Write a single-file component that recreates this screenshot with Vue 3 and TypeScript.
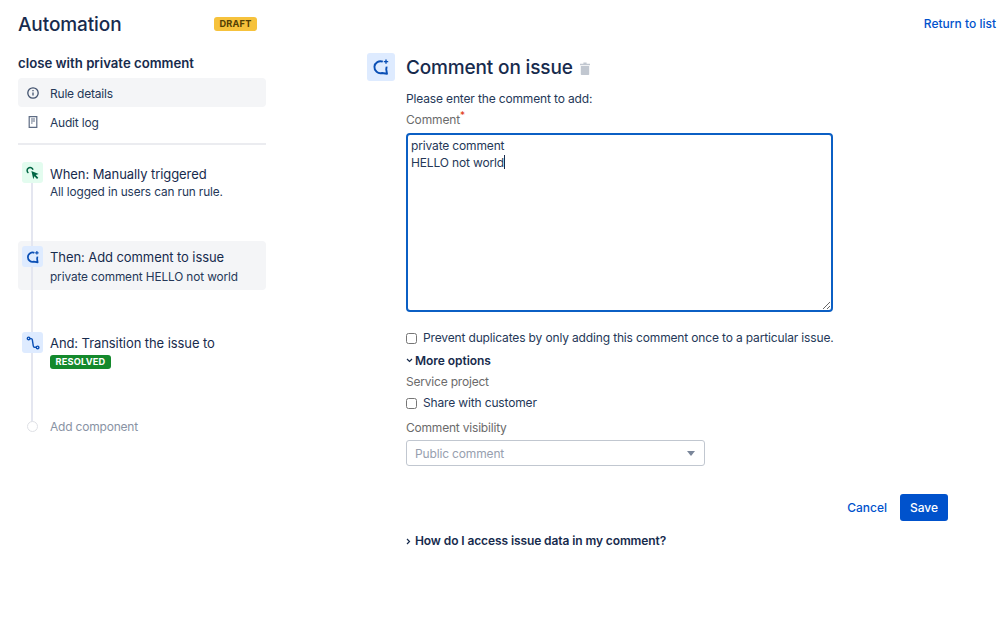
<script setup lang="ts">
import { ref } from 'vue'
const comment = ref('private comment\nHELLO not world')
</script>

<template>
  <div class="page">
    <aside class="side">
      <div class="head">
        <h1>Automation</h1>
        <span class="draft">DRAFT</span>
      </div>
      <h2>close with private comment</h2>
      <nav class="nav">
        <a class="nav-item active">
          <svg width="14" height="14" viewBox="0 0 14 14" fill="none" stroke="#42526e" stroke-width="1.3">
            <circle cx="7" cy="7" r="5.2" />
            <path d="M7 6.400v3.200" />
            <path d="M7 4.100v1.200" />
          </svg>
          <span>Rule details</span>
        </a>
        <a class="nav-item">
          <svg width="14" height="14" viewBox="0 0 14 14" fill="none" stroke="#5e6c84" stroke-width="1.2">
            <path d="M3.200 1.600h7.600v10.800H3.200z" />
            <path d="M5 4h4M5 6h4M5 8h1.600" />
          </svg>
          <span>Audit log</span>
        </a>
      </nav>
      <div class="rule"></div>
      <div class="steps">
        <div class="line"></div>
        <div class="step when">
          <span class="ic green">
            <svg width="16" height="16" viewBox="0 0 16 16">
              <path d="M6.400 6l7.300 3-3 1.100 2.600 2.700-1.300 1.200-2.600-2.700-1.100 3z" fill="#006644" />
              <path d="M3.400 8A3 3 0 1 1 8 4.800" fill="none" stroke="#006644" stroke-width="1.500" />
            </svg>
          </span>
          <div>
            <div class="st">When: Manually triggered</div>
            <div class="sd">All logged in users can run rule.</div>
          </div>
        </div>
        <div class="step then">
          <span class="ic blue">
            <svg width="14" height="14" viewBox="0 0 18 18" fill="none" stroke="#0a4fb5" stroke-width="2.200" stroke-linejoin="round">
              <path d="M10.800 3.700A6 6 0 1 0 10 15L15 15.800 14.200 11.200A6 6 0 0 0 14.500 8.600" />
              <path d="M14 1.400v4.400M11.800 3.600h4.400" stroke-width="1.500" />
            </svg>
          </span>
          <div>
            <div class="st">Then: Add comment to issue</div>
            <div class="sd">private comment HELLO not world</div>
          </div>
        </div>
        <div class="step and">
          <span class="ic blue">
            <svg width="14" height="14" viewBox="0 0 14 14" fill="none" stroke="#0a4fb5" stroke-width="1.400">
              <circle cx="2.600" cy="2.400" r="1.300" />
              <circle cx="11.600" cy="11.400" r="1.300" />
              <path d="M3.900 2.600h1.300c.6 0 1 .4 1.100 1l1 6.400c.1.800.5 1.300 1.300 1.300h1.700" />
            </svg>
          </span>
          <div>
            <div class="st">And: Transition the issue to</div>
            <span class="resolved">RESOLVED</span>
          </div>
        </div>
        <div class="step add">
          <span class="dot"></span>
          <span class="add-text">Add component</span>
        </div>
      </div>
    </aside>

    <main class="main">
      <div class="title-row">
        <span class="big-ic">
          <svg width="18" height="18" viewBox="0 0 18 18" fill="none" stroke="#0a4fb5" stroke-width="1.900" stroke-linejoin="round">
            <path d="M10.800 3.700A6 6 0 1 0 10 15L15 15.800 14.200 11.200A6 6 0 0 0 14.500 8.600" />
            <path d="M14 1.400v4.400M11.800 3.600h4.400" stroke-width="1.400" />
          </svg>
        </span>
        <h3>Comment on issue</h3>
        <svg class="trash" width="10" height="13" viewBox="0 0 10 13" fill="#c1c7d0">
          <path d="M3.400.5h3.200v1.200H10v1.500H0V1.700h3.400z" />
          <path d="M.8 4h8.400v8.200c0 .4-.3.8-.8.8H1.600c-.5 0-.8-.4-.8-.8z" />
        </svg>
      </div>
      <div class="form">
        <p class="intro">Please enter the comment to add:</p>
        <label class="lab comment-lab" for="cmt">Comment<sup>*</sup></label>
        <div class="ta-wrap">
          <textarea id="cmt" v-model="comment" spellcheck="false"></textarea>
          <span class="caret"></span>
        </div>
        <label class="check dup"><input type="checkbox" /><span>Prevent duplicates by only adding this comment once to a particular issue.</span></label>
        <div class="more">
          <svg width="7" height="5" viewBox="0 0 7 5" fill="none" stroke="#172b4d" stroke-width="1.200"><path d="M1 1l2.500 2.500L6 1" /></svg>
          <span>More options</span>
        </div>
        <div class="lab service">Service project</div>
        <label class="check share"><input type="checkbox" /><span>Share with customer</span></label>
        <div class="lab vis">Comment visibility</div>
        <div class="select">
          <span>Public comment</span>
          <i class="arrow"></i>
        </div>
        <div class="actions">
          <button class="cancel" type="button">Cancel</button>
          <button class="save" type="button">Save</button>
        </div>
        <div class="how">
          <svg width="5" height="7" viewBox="0 0 5 7" fill="none" stroke="#172b4d" stroke-width="1.200"><path d="M1 1l2.500 2.500L1 6" /></svg>
          <span>How do I access issue data in my comment?</span>
        </div>
      </div>
    </main>

    <a class="back">Return to list</a>
  </div>
</template>

<style scoped>
.page {
  display: flex;
  height: 618px;
  width: 998px;
  overflow: hidden;
  box-sizing: border-box;
  padding-left: 18px;
  background: #fff;
  font-family: Inter, "Liberation Sans", sans-serif;
  color: #172b4d;
  font-size: 12px;
  letter-spacing: -0.15px;
}
.side { width: 248px; flex: none; }
.head { display: flex; align-items: center; justify-content: space-between; height: 24px; margin-top: 13px; padding-right: 9px; }
h1 { margin: 0; font-size: 19px; font-weight: 500; line-height: 24px; letter-spacing: -0.1px; }
.draft {
  background: #f6c23c; color: #533f04; font-size: 9.200px; font-weight: 700; letter-spacing: .2px;
  border-radius: 3px; height: 14px; line-height: 14px; padding: 0 5.500px; margin-top: -3px;
}
h2 { margin: 18px 0 0; font-size: 13.200px; font-weight: 600; line-height: 16px; letter-spacing: 0; }
.nav { margin-top: 7px; }
.nav-item { display: flex; align-items: center; gap: 10px; height: 29px; box-sizing: border-box; padding: 1px 0 0 8px; border-radius: 4px; color: #253858; letter-spacing: -0.2px; }
.nav-item.active { background: #f4f5f7; }
.rule { height: 2px; background: #ebecf0; margin-top: 7px; }
.steps { position: relative; margin-top: 17px; }
.line { position: absolute; left: 13px; top: 10px; width: 2px; height: 250px; background: #e4e6f0; z-index: 1; }
.step { display: flex; gap: 7px; padding-left: 4px; }
.st { font-size: 13px; line-height: 20px; color: #172b4d; margin-top: 2px; letter-spacing: -0.08px; }
.sd { font-size: 11.800px; line-height: 17px; color: #253858; letter-spacing: -0.1px; }
.ic { position: relative; z-index: 2; width: 21px; height: 21px; border-radius: 3px; display: flex; align-items: center; justify-content: center; flex: none; }
.green { background: #e3fcef; }
.blue { background: #deebff; }
.when { height: 79px; }
.then { background: #f4f5f7; border-radius: 4px; height: 49px; padding-top: 5px; box-sizing: border-box; }
.then .st { margin-top: 1px; }
.then .sd { margin-top: 2px; }
.and { margin-top: 42px; height: 84px; }
.and .st { margin-top: 1px; }
.resolved {
  display: block; width: fit-content; margin-top: 2px; background: #14892c; color: #fff; font-size: 9.200px; font-weight: 700; letter-spacing: .2px;
  border-radius: 3px; height: 14px; line-height: 14px; padding: 0 5.500px;
}
.add { align-items: center; height: 20px; gap: 12px; padding-left: 9px; }
.dot { position: relative; z-index: 2; width: 9px; height: 9px; border: 1px solid #dfe1e6; border-radius: 50%; background: #fff; flex: none; }
.add-text { color: #8993a4; letter-spacing: -0.2px; }

.main { margin-left: 101px; width: 470px; flex: none; }
.title-row { display: flex; align-items: center; margin-top: 53px; height: 28px; }
.big-ic { width: 28px; height: 28px; border-radius: 3px; background: #deebff; display: flex; align-items: center; justify-content: center; margin-right: 11px; }
h3 { margin: 1px 0 0; font-size: 19px; font-weight: 500; line-height: 28px; letter-spacing: -0.15px; }
.trash { margin-left: 7px; margin-top: 2px; }
.form { padding-left: 39px; width: 427px; }
.intro { margin: 10px 0 0; line-height: 16px; color: #253858; }
.lab { display: block; line-height: 16px; color: #6b6b6b; }
.comment-lab { margin-top: 5px; }
.comment-lab sup { color: #de350b; font-size: 10px; line-height: 0; }
.ta-wrap { position: relative; margin-top: 5px; height: 179px; }
textarea {
  display: block; width: 100%; height: 100%; box-sizing: border-box; margin: 0;
  border: 2px solid #0b5fc4; border-radius: 4px; outline: none; padding: 2px 3px;
  font: 12px/17px Inter, "Liberation Sans", sans-serif; letter-spacing: -0.15px; color: #253858; background: #fff;
}
.caret { position: absolute; left: 98px; top: 22px; width: 1px; height: 14px; background: #172b4d; }
.check { display: flex; align-items: center; gap: 6px; line-height: 16px; color: #253858; }
.check input {
  appearance: none; width: 11px; height: 11px; margin: 0; border: 1px solid #767676; border-radius: 2.500px; background: #fff; flex: none;
}
.dup { margin-top: 18px; white-space: nowrap; }
.more { display: flex; align-items: center; gap: 2px; margin-top: 6px; height: 16px; font-weight: 600; letter-spacing: -0.05px; }
.service { margin-top: 6px; letter-spacing: -0.2px; }
.share { margin-top: 5px; }
.vis { margin-top: 9px; letter-spacing: -0.2px; }
.select {
  display: flex; align-items: center; justify-content: space-between; width: 299px; height: 26px; box-sizing: border-box; margin-top: 4px;
  border: 1px solid #c1c7d0; border-radius: 3px; padding: 0 9px 0 8px; color: #97a0af;
}
.arrow { width: 0; height: 0; border-left: 4.500px solid transparent; border-right: 4.500px solid transparent; border-top: 5px solid #7a869a; }
.actions { display: flex; justify-content: flex-end; align-items: center; gap: 13px; margin-top: 28px; margin-right: -115px; }
button { font-family: inherit; font-size: 12px; font-weight: 500; border: 0; padding: 0; letter-spacing: 0; }
.cancel { background: none; color: #0052cc; }
.save { width: 48px; height: 27px; background: #0052cc; color: #fff; border-radius: 3px; }
.how { display: flex; align-items: center; gap: 4px; margin-top: 12px; font-weight: 600; line-height: 16px; white-space: nowrap; letter-spacing: -0.1px; }
.back { position: absolute; right: 2px; top: 16px; color: #0052cc; font-size: 12px; font-weight: 500; line-height: 16px; letter-spacing: 0; }
</style>
